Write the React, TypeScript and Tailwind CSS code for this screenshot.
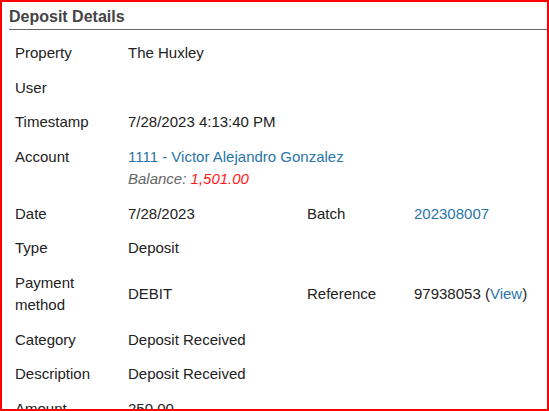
import React from "react";

const L = ({ children }: { children: React.ReactNode }) => (
  <div className="px-[6px] py-[6px] leading-[22.5px]">{children}</div>
);

export default function App() {
  return (
    <div
      className="w-[549px] h-[411px] border-2 border-[#ff0000] overflow-hidden bg-white box-border"
      style={{ fontFamily: '"Liberation Sans", Arial, sans-serif' }}
    >
      <div className="pl-[7px]">
        <h3 className="pt-[5px] pb-[2px] pl-0 text-[16px] leading-[20px] font-bold text-[#444] border-b border-[#666]">
          Deposit Details
        </h3>
        <div className="mt-[6px] grid grid-cols-[113px_179px_107px_1fr] text-[15px] text-[#222]">
          <L>Property</L>
          <div className="col-span-3 px-[6px] py-[6px] leading-[22.5px]">The Huxley</div>

          <L>User</L>
          <div className="col-span-3 px-[6px] py-[6px] leading-[22.5px]">&nbsp;</div>

          <L>Timestamp</L>
          <div className="col-span-3 px-[6px] py-[6px] leading-[22.5px]">7/28/2023 4:13:40 PM</div>

          <L>Account</L>
          <div className="col-span-3 px-[6px] py-[6px] leading-[22.5px]">
            <div className="text-[#2a75a8]">1111 - Victor Alejandro Gonzalez</div>
            <div className="italic text-[#666]">
              Balance: <span className="text-[#ff1a1a]">1,501.00</span>
            </div>
          </div>

          <L>Date</L>
          <L>7/28/2023</L>
          <L>Batch</L>
          <div className="px-[6px] py-[6px] leading-[22.5px] text-[#2a75a8]">202308007</div>

          <L>Type</L>
          <div className="col-span-3 px-[6px] py-[6px] leading-[22.5px]">Deposit</div>

          <L>Payment method</L>
          <div className="px-[6px] py-[6px] leading-[22.5px] flex items-center">DEBIT</div>
          <div className="px-[6px] py-[6px] leading-[22.5px] flex items-center">Reference</div>
          <div className="px-[6px] py-[6px] leading-[22.5px] flex items-center whitespace-nowrap">
            97938053&nbsp;(<span className="text-[#2a75a8]">View</span>)
          </div>

          <L>Category</L>
          <div className="col-span-3 px-[6px] py-[6px] leading-[22.5px]">Deposit Received</div>

          <L>Description</L>
          <div className="col-span-3 px-[6px] py-[6px] leading-[22.5px]">Deposit Received</div>

          <L>Amount</L>
          <div className="col-span-3 px-[6px] py-[6px] leading-[22.5px]">250.00</div>
        </div>
      </div>
    </div>
  );
}
